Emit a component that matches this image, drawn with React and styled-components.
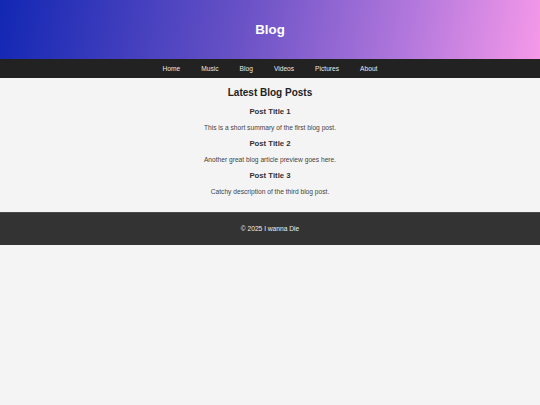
import React from "react";
import styled, { createGlobalStyle } from "styled-components";

const GlobalStyle = createGlobalStyle`
  html, body {
    margin: 0;
    padding: 0;
    background: #f4f4f4;
    font-family: "Liberation Sans", Arial, sans-serif;
  }
`;

const Header = styled.header`
  height: 59px;
  display: flex;
  align-items: center;
  justify-content: center;
  background: linear-gradient(100deg, #1227b3 0%, #6a52c6 45%, #b277dc 75%, #f699e9 100%);
`;

const Title = styled.h1`
  margin: 0;
  font-size: 13.3px;
  line-height: 16px;
  font-weight: bold;
  color: #ffffff;
`;

const Nav = styled.nav`
  height: 19px;
  background: #222222;
  display: flex;
  align-items: center;
  justify-content: center;
  gap: 21px;
`;

const NavLink = styled.a`
  color: #e8e8e8;
  text-decoration: none;
  font-size: 6.65px;
  line-height: 8px;
`;

const Main = styled.main`
  display: flex;
  flex-direction: column;
  align-items: center;
  gap: 7px;
  padding: 9px 0 16px;
  text-align: center;
`;

const SectionTitle = styled.h2`
  margin: 0 0 1px;
  font-size: 10px;
  line-height: 12px;
  font-weight: bold;
  color: #222222;
`;

const PostTitle = styled.h3`
  margin: 0;
  font-size: 7.75px;
  line-height: 10px;
  font-weight: bold;
  color: #333333;
`;

const Summary = styled.p`
  margin: 0;
  font-size: 6.65px;
  line-height: 8px;
  color: #444444;
`;

const Footer = styled.footer`
  height: 32px;
  border-top: 1px solid #4a4a4a;
  background: #333333;
  display: flex;
  align-items: center;
  justify-content: center;
  color: #eeeeee;
  font-size: 6.65px;
  line-height: 8px;
`;

const links = ["Home", "Music", "Blog", "Videos", "Pictures", "About"];

const posts = [
  { title: "Post Title 1", text: "This is a short summary of the first blog post." },
  { title: "Post Title 2", text: "Another great blog article preview goes here." },
  { title: "Post Title 3", text: "Catchy description of the third blog post." },
];

export default function App() {
  return (
    <>
      <GlobalStyle />
      <Header>
        <Title>Blog</Title>
      </Header>
      <Nav>
        {links.map((l) => (
          <NavLink key={l} href="#">
            {l}
          </NavLink>
        ))}
      </Nav>
      <Main>
        <SectionTitle>Latest Blog Posts</SectionTitle>
        {posts.map((p) => (
          <React.Fragment key={p.title}>
            <PostTitle>{p.title}</PostTitle>
            <Summary>{p.text}</Summary>
          </React.Fragment>
        ))}
      </Main>
      <Footer>© 2025 I wanna Die</Footer>
    </>
  );
}
